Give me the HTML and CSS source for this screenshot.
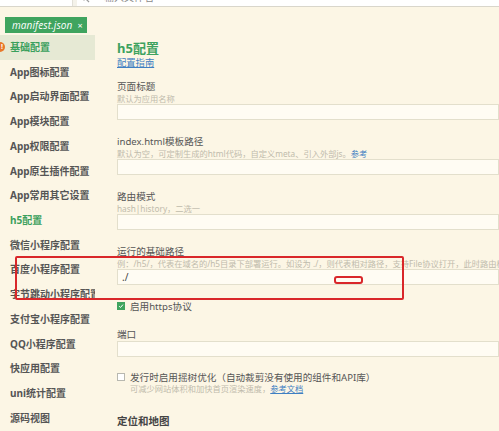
FILE: index.html
```html
<!DOCTYPE html>
<html lang="zh">
<head>
<meta charset="utf-8">
<link rel="stylesheet" href="styles.css">
</head>
<body>
<div class="app">
  <div class="topbar">
    <div class="topbar-left"></div>
    <div class="search">
      <svg class="search-icon" width="10" height="10" viewBox="0 0 10 10"><circle cx="4" cy="4" r="3" fill="none" stroke="#9a9a9a" stroke-width="1"/><path d="M6.2 6.2 L9 9" stroke="#9a9a9a" stroke-width="1.2"/></svg>
      <span class="search-ph">输入文件名</span>
    </div>
  </div>
  <div class="tabs">
    <div class="tab"><span class="tab-name">manifest.json</span><span class="tab-x">×</span></div>
  </div>
  <div class="body">
    <nav class="sidebar">
      <div class="nav-item active"><span class="warn">!</span>基础配置</div>
      <div class="nav-item">App图标配置</div>
      <div class="nav-item">App启动界面配置</div>
      <div class="nav-item">App模块配置</div>
      <div class="nav-item">App权限配置</div>
      <div class="nav-item">App原生插件配置</div>
      <div class="nav-item">App常用其它设置</div>
      <div class="nav-item green">h5配置</div>
      <div class="nav-item">微信小程序配置</div>
      <div class="nav-item">百度小程序配置</div>
      <div class="nav-item">字节跳动小程序配置</div>
      <div class="nav-item">支付宝小程序配置</div>
      <div class="nav-item">QQ小程序配置</div>
      <div class="nav-item">快应用配置</div>
      <div class="nav-item">uni统计配置</div>
      <div class="nav-item">源码视图</div>
    </nav>
    <main class="main">
      <div class="title">h5配置</div>
      <a class="guide">配置指南</a>

      <div class="field">
        <div class="label">页面标题</div>
        <div class="hint">默认为应用名称</div>
        <div class="input"></div>
      </div>

      <div class="field">
        <div class="label">index.html模板路径</div>
        <div class="hint">默认为空，可定制生成的html代码，自定义meta、引入外部js。<a class="link">参考</a></div>
        <div class="input"></div>
      </div>

      <div class="field">
        <div class="label">路由模式</div>
        <div class="hint">hash|history，二选一</div>
        <div class="input"></div>
      </div>

      <div class="field">
        <div class="label">运行的基础路径</div>
        <div class="hint">例：/h5/，代表在域名的/h5目录下部署运行。如设为 ./，则代表相对路径，支持File协议打开，此时路由模式强制为hash模式</div>
        <div class="input">./</div>
      </div>

      <div class="check-row">
        <span class="box checked"><svg width="8" height="8" viewBox="0 0 8 8"><path d="M1.5 4.2 L3.3 6 L6.6 2.2" fill="none" stroke="#fff" stroke-width="1.3"/></svg></span>
        <span class="check-text">启用https协议</span>
      </div>

      <div class="field port">
        <div class="label">端口</div>
        <div class="input"></div>
      </div>

      <div class="check-row tree">
        <span class="box"></span>
        <span class="check-text">发行时启用摇树优化（自动裁剪没有使用的组件和API库）</span>
      </div>
      <div class="hint indent">可减少网站体积和加快首页渲染速度，<a class="link">参考文档</a></div>

      <div class="section">定位和地图</div>
    </main>
  </div>
  <div class="mark big"></div>
  <div class="mark small"></div>
</div>
</body>
</html>
```

FILE: styles.css
```css
* { box-sizing: border-box; }
html, body { margin: 0; padding: 0; }
body {
  width: 499px;
  height: 431px;
  overflow: hidden;
  background: #fcf6e5;
  font-family: "Noto Sans", "Noto Sans CJK SC", sans-serif;
  color: #555;
}
.app { position: relative; width: 499px; height: 431px; overflow: hidden; }

.topbar {
  display: flex;
  height: 20px;
  margin-top: -13px;
  border-bottom: 1px solid #d9d6cb;
  background: #f4f2ea;
}
.topbar-left { width: 73px; background: #fff; border-right: 1px solid #e2e0d8; }
.search {
  flex: 1;
  margin-left: 4px;
  background: #fff;
  display: flex;
  align-items: center;
  padding-left: 3px;
  gap: 14px;
}
.search-icon { margin-top: 2px; }
.search-ph { font-size: 10px; color: #8a8a8a; }

.tabs { height: 28px; padding: 5px 0 0 5px; }
.tab {
  display: inline-flex;
  align-items: center;
  height: 16px;
  width: 82px;
  padding-left: 7px;
  background: #3fa45f;
  color: #fff;
  font-size: 10px;
  font-style: italic;
}
.tab-name { font-family: "Open Sans", "Noto Sans", sans-serif; letter-spacing: 0.1px; }
.tab-x { font-style: normal; margin-left: 5px; font-size: 9px; }

.body { display: flex; }
.sidebar { width: 95px; flex: none; }
.nav-item {
  position: relative;
  height: 24.73px;
  line-height: 24.73px;
  padding-left: 10px;
  font-size: 10px;
  font-weight: bold;
  color: #555;
  white-space: nowrap;
  overflow: hidden;
}
.nav-item.active { background: #e6e9d4; color: #3aa05c; }
.nav-item.green { color: #3aa05c; }
.warn {
  position: absolute;
  left: -5px;
  top: 7px;
  width: 10px;
  height: 10px;
  border-radius: 50%;
  background: #e8782a;
  color: #fff;
  font-size: 7px;
  line-height: 10px;
  text-align: right;
  padding-right: 2px;
}

.main {
  flex: 1;
  min-width: 0;
  padding: 5px 0 0 22px;
  overflow: hidden;
  white-space: nowrap;
}
.title { font-size: 13px; font-weight: bold; color: #3ea25f; line-height: 16px; }
.guide {
  display: block;
  font-size: 9.3px;
  line-height: 12px;
  color: #3f7fc2;
  text-decoration: underline;
  margin-top: 1px;
}
.field { margin-top: 12px; }
.field + .field { margin-top: 16px; }
.label { font-size: 9.6px; line-height: 12px; color: #555; }
.hint { font-size: 8.25px; line-height: 11px; color: #bfbbac; }
.link { color: #3f7fc2; }
.hint .link { text-decoration: none; }
.indent .link { text-decoration: underline; }
.input {
  height: 16px;
  background: #fffcf3;
  border: 1px solid #e3dfcc;
  font-size: 10px;
  line-height: 14px;
  padding-left: 4px;
  color: #444;
}
.check-row {
  display: flex;
  align-items: center;
  gap: 5px;
  margin-top: 15px;
  height: 12px;
}
.box {
  width: 8px;
  height: 8px;
  border: 1px solid #b8b8b0;
  background: #fff;
  display: inline-flex;
  align-items: center;
  justify-content: center;
}
.box.checked { background: #3fa45f; border-color: #3fa45f; }
.box svg { display: block; }
.check-text { font-size: 9.6px; color: #555; }
.port { margin-top: 17px; }
.tree { margin-top: 14px; }
.indent { padding-left: 13px; margin-top: 0; }
.section { margin-top: 20px; font-size: 10.5px; font-weight: bold; color: #444; line-height: 14px; }

.mark {
  position: absolute;
  border: 2px solid #d9272a;
  border-radius: 2px;
}
.mark.big { left: 15px; top: 256px; width: 389px; height: 44px; }
.mark.small { left: 334px; top: 276px; width: 29px; height: 8px; border-radius: 3px; }
```
